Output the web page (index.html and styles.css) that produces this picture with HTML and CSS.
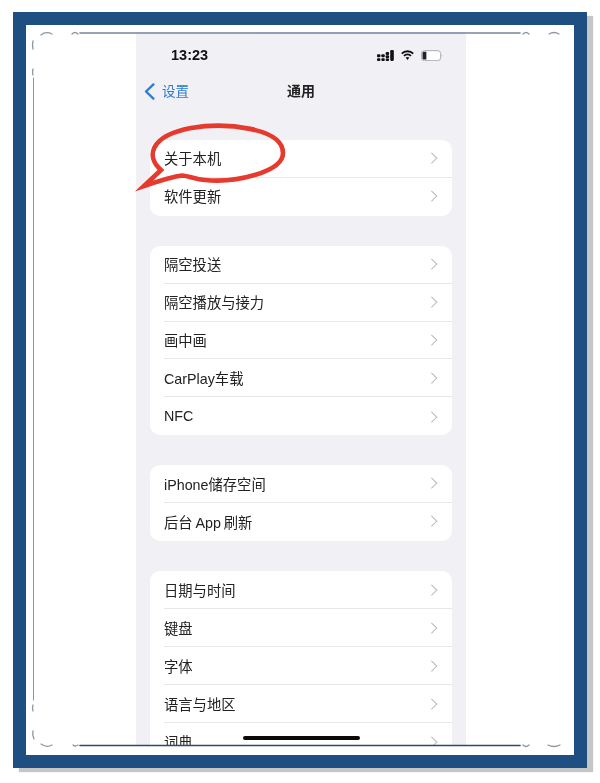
FILE: index.html
```html
<!DOCTYPE html>
<html lang="zh">
  <head>
    <meta charset="utf-8" />
    <title>通用</title>
    <link rel="stylesheet" href="styles.css" />
  </head>
  <body>
    <div class="frame">
      <div class="phone">
        <div class="status">
          <span class="time">13:23</span>
          <div class="status-icons">
            <svg width="17" height="11.4" viewBox="0 0 18 12">
              <g fill="#111">
                <rect x="0" y="4.6" width="3.6" height="3" rx="1" />
                <rect x="0" y="8.6" width="3.6" height="3" rx="1" />
                <rect x="4.6" y="4.6" width="3.6" height="3" rx="1" />
                <rect x="4.6" y="8.6" width="3.6" height="3" rx="1" />
                <rect x="9.2" y="2.2" width="3.6" height="3" rx="1" />
                <rect x="9.2" y="5.6" width="3.6" height="3" rx="1" />
                <rect x="9.2" y="9" width="3.6" height="2.6" rx="1" />
                <rect x="14" y="0" width="3.8" height="11.6" rx="1.2" />
              </g>
            </svg>
            <svg width="13" height="10.2" viewBox="0 0 14 11">
              <g fill="none" stroke="#111" stroke-width="2">
                <path d="M0.8 4 C4.2 0.4 9.8 0.4 13.2 4" />
                <path d="M3.2 6.4 C5.3 4.4 8.7 4.4 10.8 6.4" />
              </g>
              <path d="M5 8.2 C6.2 7.2 7.8 7.2 9 8.2 L7 10.8 Z" fill="#111" />
            </svg>
            <svg class="battery" width="22" height="11.5" viewBox="0 0 23 12">
              <rect x="0.5" y="0.7" width="20" height="10.4" rx="3" fill="#fff" stroke="#a9a9ad" />
              <path d="M1.6 3 Q1.6 1.8 3 1.8 H5.6 V10 H3 Q1.6 10 1.6 9 Z" fill="#222" />
              <path d="M21.6 4.2 Q23 5.8 21.6 7.6 Z" fill="#a9a9ad" />
            </svg>
          </div>
        </div>

        <div class="nav">
          <div class="back">
            <svg width="11" height="17" viewBox="0 0 11 17">
              <path d="M9.4 1.4 L2 8.5 L9.4 15.6" fill="none" stroke="#2b7bd0" stroke-width="2.3" stroke-linecap="round" stroke-linejoin="round" />
            </svg>
            <span>设置</span>
          </div>
          <div class="nav-title">通用</div>
        </div>

        <div class="group">
          <div class="row"><span>关于本机</span><i class="chev"></i></div>
          <div class="row"><span>软件更新</span><i class="chev"></i></div>
        </div>

        <div class="group">
          <div class="row"><span>隔空投送</span><i class="chev"></i></div>
          <div class="row"><span>隔空播放与接力</span><i class="chev"></i></div>
          <div class="row"><span>画中画</span><i class="chev"></i></div>
          <div class="row"><span>CarPlay车载</span><i class="chev"></i></div>
          <div class="row row-latin"><span>NFC</span><i class="chev"></i></div>
        </div>

        <div class="group">
          <div class="row"><span>iPhone储存空间</span><i class="chev"></i></div>
          <div class="row"><span>后台&#8201;App&#8201;刷新</span><i class="chev"></i></div>
        </div>

        <div class="group group-last">
          <div class="row"><span>日期与时间</span><i class="chev"></i></div>
          <div class="row"><span>键盘</span><i class="chev"></i></div>
          <div class="row"><span>字体</span><i class="chev"></i></div>
          <div class="row"><span>语言与地区</span><i class="chev"></i></div>
          <div class="row"><span>词典</span><i class="chev"></i></div>
        </div>

        <div class="home-bar"></div>
      </div>

      <svg class="overlay" width="548" height="730" viewBox="26 25 548 730">
        <!-- crop lines and corner marks -->
        <g fill="none" stroke-linecap="round">
          <path d="M80 33 H520" stroke="#76869a" stroke-width="1.6" />
          <path d="M80 745.5 H520" stroke="#2f4a68" stroke-width="1.6" />
          <path d="M33.5 78 V700" stroke="#8a97a8" stroke-width="1" />
          <g stroke="#8d96a2" stroke-width="1.3">
            <path d="M41 35 Q46 31 52 34" />
            <path d="M72 34 Q75 31 78 34" />
            <path d="M33 41 Q32 45 33 49" />
            <path d="M33 69 Q32 72 33 75" />
            <path d="M33 705 Q32 708 33 711" />
            <path d="M33 731 Q32 735 34 739" />
            <path d="M41 744 Q47 748 52 745" />
            <path d="M73 745 Q75 747 78 745" />
            <path d="M523 34 Q526 31 529 34" />
            <path d="M549 34 Q554 31 559 34" />
            <path d="M523 745 Q526 748 529 745" />
            <path d="M548 745 Q554 748 560 745" />
          </g>
        </g>
        <!-- red callout -->
        <path d="M144 186 L161 170 C146 157 149 136 191 128 C226 122 283 128 283 153 C283 172 236 183 205 180 C195 179 189 176 182 175.5 C170 177 156 182 144 186 Z" fill="none" stroke="#e63a2e" stroke-width="4.6" stroke-linejoin="miter" stroke-miterlimit="10" />
      </svg>
    </div>
  </body>
</html>
```

FILE: styles.css
```css
html,
body {
  margin: 0;
  height: 783px;
  overflow: hidden;
  background: #ffffff;
}

body {
  padding: 12px 0 0 13px;
  box-sizing: border-box;
  font-family: "Liberation Sans", "Noto Sans CJK SC", sans-serif;
}

.frame {
  position: relative;
  width: 574px;
  height: 756px;
  box-sizing: border-box;
  border: 13px solid #1f4e83;
  background: #ffffff;
  box-shadow: 6px 4px 1px #c4c6c8;
  padding: 7px 0 0 110px;
}

.overlay {
  position: absolute;
  left: 0;
  top: 0;
}

.phone {
  position: relative;
  width: 330px;
  height: 713px;
  background: #f0f0f5;
  overflow: hidden;
  filter: blur(0.3px);
}

.status {
  height: 46px;
  display: flex;
  align-items: center;
  justify-content: space-between;
  padding: 0 23px 0 35px;
  box-sizing: border-box;
}

.time {
  font-size: 14.5px;
  font-weight: bold;
  color: #111111;
}

.status-icons {
  display: flex;
  align-items: center;
  gap: 7px;
  margin-top: 1px;
}

.nav {
  position: relative;
  height: 26px;
  margin-bottom: 36px;
  display: flex;
  align-items: center;
  justify-content: center;
}

.back {
  position: absolute;
  left: 8px;
  top: 5px;
  display: flex;
  align-items: center;
  gap: 7px;
  color: #2b7bd0;
  font-size: 13.5px;
  line-height: 17px;
}

.nav-title {
  font-size: 14px;
  font-weight: bold;
  color: #222222;
  margin-bottom: 2px;
}

.group {
  margin: 0 14px 30px;
  background: #ffffff;
  border-radius: 10px;
  overflow: hidden;
}

.row {
  position: relative;
  height: 37.9px;
  display: flex;
  align-items: center;
  justify-content: space-between;
  padding: 0 16px 2px 14px;
  box-sizing: border-box;
  font-size: 14.3px;
  color: #222222;
}

.row-latin,
.group-last .row {
  padding-bottom: 0;
}

.row + .row::before {
  content: "";
  position: absolute;
  left: 14px;
  right: 0;
  top: -1px;
  height: 1px;
  background: #e8e8ec;
}

.chev {
  width: 6.5px;
  height: 6.5px;
  border-top: 1.6px solid #b9b9be;
  border-right: 1.6px solid #b9b9be;
  transform: rotate(45deg);
  margin-right: 1px;
}

.home-bar {
  position: absolute;
  left: 107px;
  bottom: 5px;
  width: 117px;
  height: 4px;
  border-radius: 2px;
  background: #0a0a0a;
}
```
